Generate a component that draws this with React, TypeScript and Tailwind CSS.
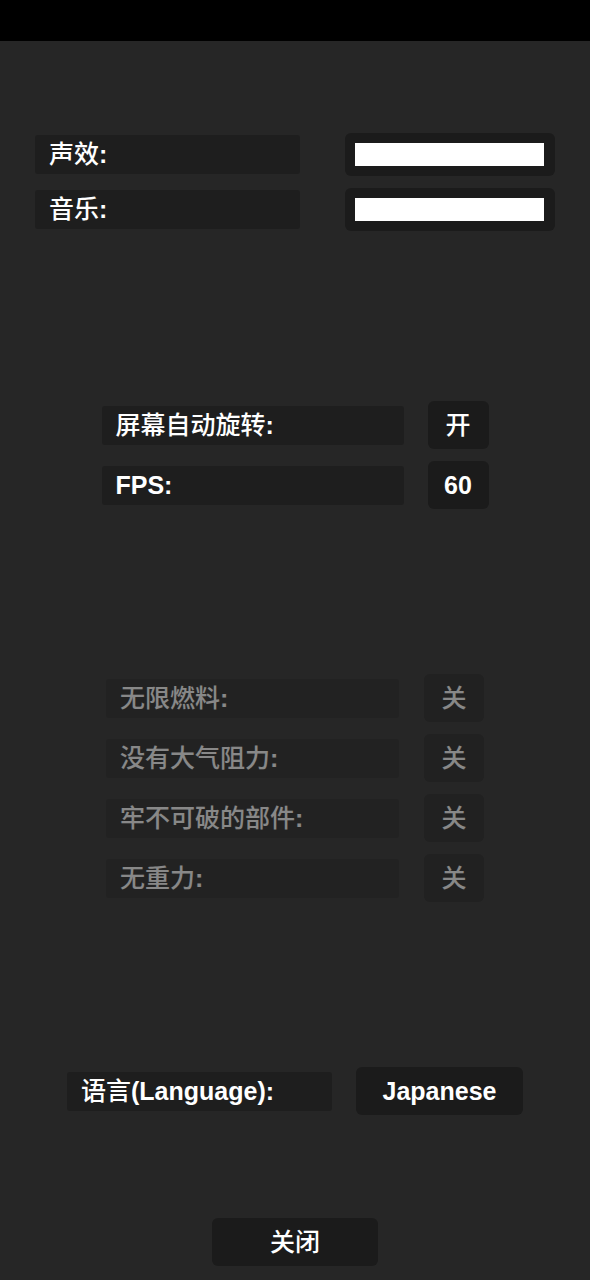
import React from 'react';

const font = { fontFamily: '"Liberation Sans", "Noto Sans CJK SC", sans-serif' };

// CJK glyphs in the game font are lighter than the latin ones
const Mixed = ({ text }: { text: string }) => (
  <>
    {text.split(/([\u4e00-\u9fff]+)/).map((part, i) =>
      /[\u4e00-\u9fff]/.test(part) ? (
        <span key={i} className="font-medium">{part}</span>
      ) : (
        <span key={i}>{part}</span>
      )
    )}
  </>
);

const Label = ({ text, width }: { text: string; width: string }) => (
  <div className={`${width} h-[39px] flex items-center pl-[14px] bg-[#1e1e1e] rounded-[3px] text-[25px] font-bold leading-none whitespace-pre`}>
    <Mixed text={text} />
  </div>
);

const Toggle = ({ value, width }: { value: string; width: string }) => (
  <div className={`${width} h-12 flex items-center justify-center bg-[#1b1b1b] rounded-md text-[25px] font-bold leading-none`}>
    <Mixed text={value} />
  </div>
);

const Slider = () => (
  <div className="w-[210px] h-[43px] bg-[#1b1b1b] rounded-md flex items-center pl-[10px]">
    <div className="w-[189px] h-[23px] bg-white" />
  </div>
);

const cheats = ['无限燃料:', '没有大气阻力:', '牢不可破的部件:', '无重力:'];

export default function App() {
  return (
    <div className="w-[590px] h-[1280px] bg-[#262626] text-white flex flex-col overflow-hidden" style={font}>
      <div className="h-[41px] bg-black" />

      {/* audio */}
      <div className="mt-[92px] flex flex-col gap-3">
        {['声效:', '音乐:'].map((t) => (
          <div key={t} className="flex justify-center items-center gap-[45px]">
            <Label text={t} width="w-[265px]" />
            <Slider />
          </div>
        ))}
      </div>

      {/* display */}
      <div className="mt-[170px] flex flex-col gap-3">
        <div className="flex justify-center items-center gap-6">
          <Label text="屏幕自动旋转:" width="w-[302px]" />
          <Toggle value="开" width="w-[61px]" />
        </div>
        <div className="flex justify-center items-center gap-6">
          <Label text="FPS:" width="w-[302px]" />
          <Toggle value="60" width="w-[61px]" />
        </div>
      </div>

      {/* cheats, disabled */}
      <div className="mt-[165px] flex flex-col gap-3 opacity-[0.45]">
        {cheats.map((t) => (
          <div key={t} className="flex justify-center items-center gap-[25px]">
            <Label text={t} width="w-[293px]" />
            <Toggle value="关" width="w-[60px]" />
          </div>
        ))}
      </div>

      {/* language */}
      <div className="mt-[165px] flex justify-center items-center gap-6">
        <Label text="语言(Language):" width="w-[265px]" />
        <Toggle value="Japanese" width="w-[167px]" />
      </div>

      <div className="mt-[103px] flex justify-center">
        <Toggle value="关闭" width="w-[166px]" />
      </div>
    </div>
  );
}
